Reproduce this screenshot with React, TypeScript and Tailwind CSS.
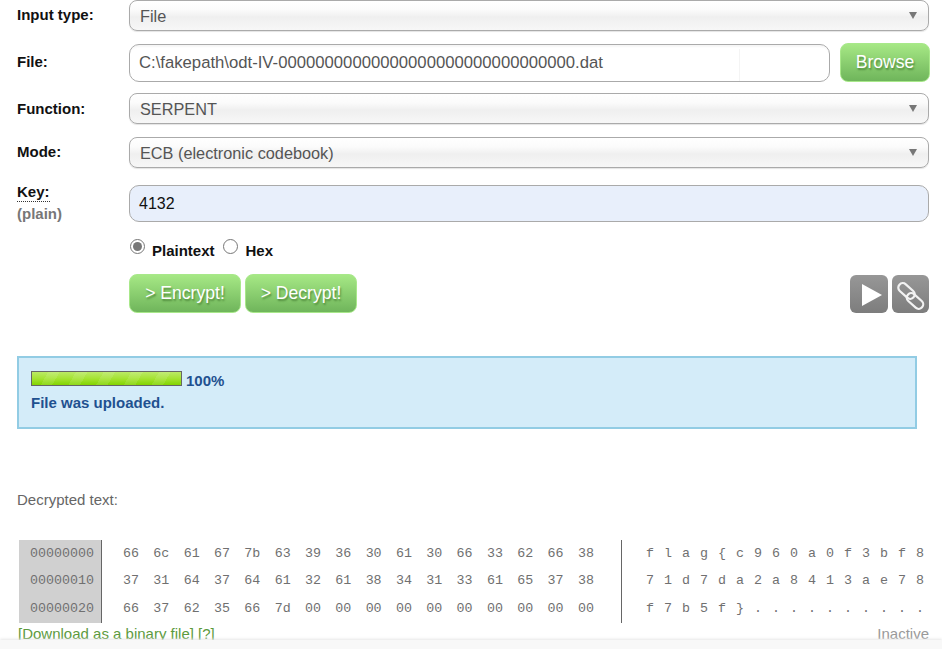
const sel = "relative h-[31px] flex-1 rounded-[8px] border border-[#aaa] bg-[linear-gradient(to_bottom,#fff_0%,#fbfbfb_30%,#f2f2f2_50%,#efefef_55%,#f7f7f7_100%)] pl-[10px] pt-[1px] flex items-center text-[16.3px] text-[#555] shadow-[0_1px_1px_#e4e4e4]";
const lab = "w-[112px] shrink-0 text-[15px] font-bold text-[#111]";
const btn = "rounded-[8px] border border-[#a8e88a] bg-[linear-gradient(to_bottom,#a6e885_0%,#6fb55b_100%)] text-[17.6px] text-white [text-shadow:1px_2px_2px_#4f8a3c] flex items-center justify-center";

function Select({ label, value, cls, labelCls = "" }: { label: string; value: string; cls: string; labelCls?: string }) {
  return (
    <div className={`flex items-center ${cls}`}>
      <div className={`${lab} ${labelCls}`}>{label}</div>
      <div className={sel}>
        {value}
        <span className="absolute right-[11px] top-[11px] h-0 w-0 border-x-[4.5px] border-t-[7px] border-x-transparent border-t-[#777]" />
      </div>
    </div>
  );
}

const hex = [
  { off: "00000000", b: "66 6c 61 67 7b 63 39 36 30 61 30 66 33 62 66 38", t: "f l a g { c 9 6 0 a 0 f 3 b f 8" },
  { off: "00000010", b: "37 31 64 37 64 61 32 61 38 34 31 33 61 65 37 38", t: "7 1 d 7 d a 2 a 8 4 1 3 a e 7 8" },
  { off: "00000020", b: "66 37 62 35 66 7d 00 00 00 00 00 00 00 00 00 00", t: "f 7 b 5 f } . . . . . . . . . ." },
];

export default function App() {
  return (
    <div className="relative h-[649px] w-[942px] overflow-hidden bg-white font-['Liberation_Sans',Arial,sans-serif]">
      <div className="flex flex-col pl-[17px] pr-[13px] pt-0">
        <Select label="Input type:" value="File" cls="" />
        <div className="mt-[12px] flex items-center">
          <div className={lab}>File:</div>
          <div className="relative h-[38px] flex-1 rounded-[10px] border border-[#aaa] bg-white pl-[9px] text-[16.7px] leading-[35px] text-[#555] shadow-[inset_0_4px_2px_-2px_#f6f6f6]">
            C:\fakepath\odt-IV-00000000000000000000000000000000.dat
            <span className="absolute bottom-0 right-[89px] top-[4px] w-px bg-[#f4f4f4]" />
          </div>
          <div className={`${btn} -mr-px ml-[10px] h-[39px] w-[90px]`}>Browse</div>
        </div>
        <Select label="Function:" value="SERPENT" cls="mt-[11px]" labelCls="pt-[1px]" />
        <Select label="Mode:" value="ECB (electronic codebook)" cls="mt-[13px]" />
        <div className="mt-[17px] flex items-start">
          <div className="w-[112px] shrink-0 -mt-[2px] text-[15px] font-bold">
            <div className="w-fit border-b border-dotted border-[#333] leading-[18px] text-[#111]">Key:</div>
            <div className="mt-[4px] leading-[16px] text-[#777]">(plain)</div>
          </div>
          <div className="h-[37px] flex-1 rounded-[10px] border border-[#aaa] bg-[#e8effb] pl-[9px] text-[16px] leading-[35px] text-[#111]">4132</div>
        </div>
        <div className="mt-[17px] ml-[113px] flex items-center text-[15px] font-bold leading-[21px] text-[#111]">
          <span className="mb-[7px] flex h-[15px] w-[15px] items-center justify-center rounded-full border border-[#777] bg-white">
            <span className="h-[9px] w-[9px] rounded-full bg-[#777]" />
          </span>
          <span className="ml-[7px]">Plaintext</span>
          <span className="mb-[7px] ml-[8px] h-[15px] w-[15px] rounded-full border border-[#777] bg-white" />
          <span className="ml-[8px]">Hex</span>
        </div>
        <div className="mt-[13px] ml-[112px] flex items-center">
          <div className={`${btn} h-[39px] w-[112px]`}>&gt; Encrypt!</div>
          <div className={`${btn} ml-[4px] h-[39px] w-[112px]`}>&gt; Decrypt!</div>
          <div className="ml-auto flex gap-[4px]">
            <div className="h-[38px] w-[38px] rounded-[6px] bg-[linear-gradient(to_bottom,#979797,#7d7d7d)]">
              <svg width="38" height="38" viewBox="0 0 38 38"><path d="M12 9 L32 20 L12 31 Z" fill="#fff" /></svg>
            </div>
            <div className="h-[38px] w-[37px] rounded-[6px] bg-[linear-gradient(to_bottom,#979797,#7d7d7d)]">
              <svg width="37" height="38" viewBox="0 0 37 38" fill="none" stroke="#f2f2f2" strokeWidth="2.2">
                <rect x="5" y="11.5" width="19" height="9" rx="4.5" transform="rotate(42 14.5 16)" />
                <rect x="13.5" y="21.5" width="19" height="9" rx="4.5" transform="rotate(42 23 26)" />
              </svg>
            </div>
          </div>
        </div>
        <div className="mt-[43px] mr-[12px] h-[73px] border-2 border-[#92cce4] bg-[#d4ecf9] pl-[12px] pt-[13px] text-[15px] font-bold text-[#1f5190]">
          <div className="flex items-start">
            <div className="h-[15px] w-[151px] border border-[#666] bg-[repeating-linear-gradient(120deg,transparent_0,transparent_14px,rgba(255,255,255,0.1)_14px,rgba(255,255,255,0.1)_24px),linear-gradient(to_bottom,#bbea66,#a2e22e_55%,#82d400)]" />
            <span className="ml-[4px] mt-[2px] leading-[16px]">100%</span>
          </div>
          <div className="mt-[6px] leading-[16px]">File was uploaded.</div>
        </div>
        <div className="mt-[63px] text-[15px] leading-[16px] text-[#666]">Decrypted text:</div>
        <div className="relative mt-[32px] ml-[2px] flex h-[83px] font-['Liberation_Mono',monospace] text-[13.33px] text-[#707070]">
          <div className="flex w-[83px] shrink-0 flex-col justify-around border-r border-[#666] bg-[#d0d0d0] pr-[7px] text-right">
            {hex.map((r) => <div key={r.off}>{r.off}</div>)}
          </div>
          <div className="ml-[21px] flex w-[499px] shrink-0 flex-col justify-around border-r border-[#666]">
            {hex.map((r) => (
              <div key={r.off} className="flex">
                {r.b.split(" ").map((x, i) => <span key={i} className="w-[30.33px] shrink-0">{x}</span>)}
              </div>
            ))}
          </div>
          <div className="ml-[24px] flex shrink-0 flex-col justify-around">
            {hex.map((r) => (
              <div key={r.off} className="flex">
                {r.t.split(" ").map((x, i) => <span key={i} className="w-[18px] shrink-0">{x}</span>)}
              </div>
            ))}
          </div>
        </div>
        <div className="mt-[3px] flex justify-between text-[15px] leading-[16px]">
          <span className="ml-px text-[#5c9a3d]">[Download as a binary file] [?]</span>
          <span className="text-[#999]">Inactive</span>
        </div>
      </div>
      <div className="absolute bottom-0 left-0 h-[9px] w-full bg-[#f8f8f8] shadow-[0_-1px_3px_#e6e6e6]" />
    </div>
  );
}
